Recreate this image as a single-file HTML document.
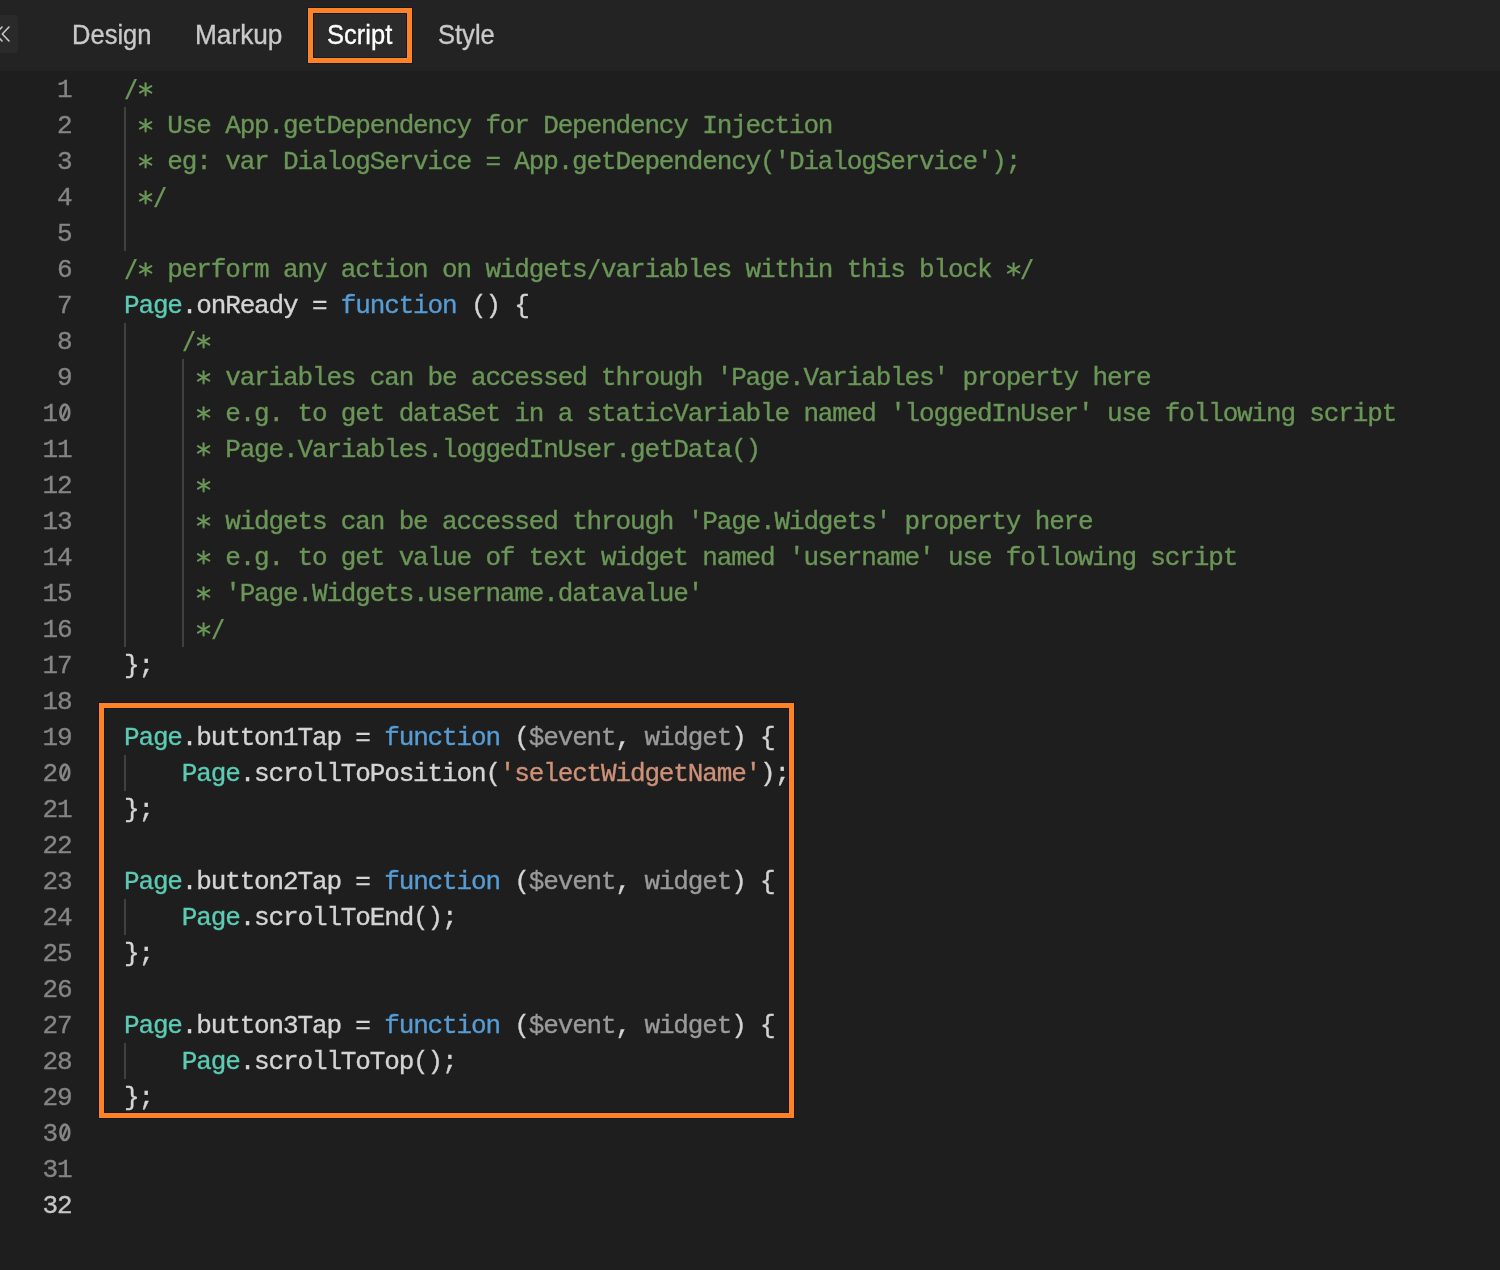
<!DOCTYPE html>
<html><head><meta charset="utf-8">
<style>
html,body{margin:0;padding:0;}
#code{position:absolute;left:0;top:0;width:1500px;height:1270px;will-change:transform;}
body{width:1500px;height:1270px;background:#1e1e1e;position:relative;overflow:hidden;font-family:"Liberation Sans",sans-serif;}
#hdr{position:absolute;left:0;top:0;width:1500px;height:71px;background:#232323;}
#hdrt{position:absolute;left:0;top:0;width:1500px;height:71px;will-change:transform;}
#back{position:absolute;left:-6px;top:15px;width:24px;height:38px;background:#2a2a2a;border-radius:4px;}
#back svg{position:absolute;left:0;top:0;}
.tab{position:absolute;top:-1px;height:71px;line-height:71px;font-size:27.6px;color:#c9c9c9;white-space:nowrap;transform-origin:0 0;transform:scaleX(0.925);-webkit-text-stroke:0.35px currentColor;}
#scr{position:absolute;left:308px;top:8px;width:94px;height:45px;border:5px solid #ff8226;box-shadow:0 0 0 1px rgba(16,24,32,.8),inset 0 0 0 1px rgba(16,24,32,.8);background:#2b2b2b;}
.tab.on{color:#ffffff;}
.ln{position:absolute;left:0;width:71.5px;text-align:right;height:36px;line-height:36px;font-family:"Liberation Mono",monospace;font-size:26px;letter-spacing:-1.147px;color:#858585;white-space:pre;-webkit-text-stroke:0.35px currentColor;}
.ln.act{color:#c6c6c6;}
.cl{position:absolute;left:124px;height:36px;line-height:36px;font-family:"Liberation Mono",monospace;font-size:26px;letter-spacing:-1.147px;color:#d4d4d4;white-space:pre;-webkit-text-stroke:0.35px currentColor;}
.c{color:#6a9657;} .t{color:#5ccbb3;} .k{color:#569cd6;} .s{color:#ce9178;} .p{color:#9a9a9a;} .d{color:#d4d4d4;}
.ast{position:absolute;}
.g{position:absolute;width:2px;background:#404040;}
#hl{position:absolute;left:99px;top:703px;width:685px;height:405px;border:5px solid #ff8226;box-shadow:0 0 0 1px rgba(16,24,32,.8),inset 0 0 0 1px rgba(16,24,32,.8);}
</style></head><body>
<div id="hdr">
 <div id="back"><svg width="24" height="38" viewBox="0 0 24 38"><polyline points="8,12 1.3,19 8,26" fill="none" stroke="#c8c8c8" stroke-width="1.6" stroke-linecap="round" stroke-linejoin="round"/><polyline points="15,12 8.3,19 15,26" fill="none" stroke="#c8c8c8" stroke-width="1.6" stroke-linecap="round" stroke-linejoin="round"/></svg></div>
 <div id="scr"></div>
 <div id="hdrt">
 <div class="tab" style="left:72px">Design</div>
 <div class="tab" style="left:195px;transform:scaleX(0.95)">Markup</div>
 <div class="tab on" style="left:327px">Script</div>
 <div class="tab" style="left:438px">Style</div>
 </div>
</div>
<div id="code">
<div class="ln" style="top:72px">1</div>
<svg class="ast" style="left:124.00px;top:71px" width="15" height="36"><polygon points="10.4,8 13,8 3.6,28.2 1,28.2" fill="#6a9657"/></svg>
<svg class="ast" style="left:138.46px;top:71px" width="15" height="36"><g stroke="#6a9657" stroke-width="2.1" stroke-linecap="round"><line x1="7.6" y1="12.299999999999999" x2="7.6" y2="24.5"/><line x1="1.90" y1="15.20" x2="13.30" y2="21.60"/><line x1="1.90" y1="21.60" x2="13.30" y2="15.20"/></g></svg>
<div class="cl" style="top:72px"><span class="c">  </span></div>
<div class="ln" style="top:108px">2</div>
<svg class="ast" style="left:138.46px;top:107px" width="15" height="36"><g stroke="#6a9657" stroke-width="2.1" stroke-linecap="round"><line x1="7.6" y1="12.299999999999999" x2="7.6" y2="24.5"/><line x1="1.90" y1="15.20" x2="13.30" y2="21.60"/><line x1="1.90" y1="21.60" x2="13.30" y2="15.20"/></g></svg>
<div class="cl" style="top:108px"><span class="c">   Use App.getDependency for Dependency Injection</span></div>
<div class="ln" style="top:144px">3</div>
<svg class="ast" style="left:138.46px;top:143px" width="15" height="36"><g stroke="#6a9657" stroke-width="2.1" stroke-linecap="round"><line x1="7.6" y1="12.299999999999999" x2="7.6" y2="24.5"/><line x1="1.90" y1="15.20" x2="13.30" y2="21.60"/><line x1="1.90" y1="21.60" x2="13.30" y2="15.20"/></g></svg>
<div class="cl" style="top:144px"><span class="c">   eg: var DialogService = App.getDependency(&#x27;DialogService&#x27;);</span></div>
<div class="ln" style="top:180px">4</div>
<svg class="ast" style="left:138.46px;top:179px" width="15" height="36"><g stroke="#6a9657" stroke-width="2.1" stroke-linecap="round"><line x1="7.6" y1="12.299999999999999" x2="7.6" y2="24.5"/><line x1="1.90" y1="15.20" x2="13.30" y2="21.60"/><line x1="1.90" y1="21.60" x2="13.30" y2="15.20"/></g></svg>
<svg class="ast" style="left:152.91px;top:179px" width="15" height="36"><polygon points="10.4,8 13,8 3.6,28.2 1,28.2" fill="#6a9657"/></svg>
<div class="cl" style="top:180px"><span class="c">   </span></div>
<div class="ln" style="top:216px">5</div>
<div class="ln" style="top:252px">6</div>
<svg class="ast" style="left:124.00px;top:251px" width="15" height="36"><polygon points="10.4,8 13,8 3.6,28.2 1,28.2" fill="#6a9657"/></svg>
<svg class="ast" style="left:138.46px;top:251px" width="15" height="36"><g stroke="#6a9657" stroke-width="2.1" stroke-linecap="round"><line x1="7.6" y1="12.299999999999999" x2="7.6" y2="24.5"/><line x1="1.90" y1="15.20" x2="13.30" y2="21.60"/><line x1="1.90" y1="21.60" x2="13.30" y2="15.20"/></g></svg>
<svg class="ast" style="left:586.56px;top:251px" width="15" height="36"><polygon points="10.4,8 13,8 3.6,28.2 1,28.2" fill="#6a9657"/></svg>
<svg class="ast" style="left:1005.75px;top:251px" width="15" height="36"><g stroke="#6a9657" stroke-width="2.1" stroke-linecap="round"><line x1="7.6" y1="12.299999999999999" x2="7.6" y2="24.5"/><line x1="1.90" y1="15.20" x2="13.30" y2="21.60"/><line x1="1.90" y1="21.60" x2="13.30" y2="15.20"/></g></svg>
<svg class="ast" style="left:1020.21px;top:251px" width="15" height="36"><polygon points="10.4,8 13,8 3.6,28.2 1,28.2" fill="#6a9657"/></svg>
<div class="cl" style="top:252px"><span class="c">   perform any action on widgets variables within this block   </span></div>
<div class="ln" style="top:288px">7</div>
<div class="cl" style="top:288px"><span class="t">Page</span><span class="d">.onReady = </span><span class="k">function</span><span class="d"> () {</span></div>
<div class="ln" style="top:324px">8</div>
<svg class="ast" style="left:181.82px;top:323px" width="15" height="36"><polygon points="10.4,8 13,8 3.6,28.2 1,28.2" fill="#6a9657"/></svg>
<svg class="ast" style="left:196.28px;top:323px" width="15" height="36"><g stroke="#6a9657" stroke-width="2.1" stroke-linecap="round"><line x1="7.6" y1="12.299999999999999" x2="7.6" y2="24.5"/><line x1="1.90" y1="15.20" x2="13.30" y2="21.60"/><line x1="1.90" y1="21.60" x2="13.30" y2="15.20"/></g></svg>
<div class="cl" style="top:324px"><span class="d">    </span><span class="c">  </span></div>
<div class="ln" style="top:360px">9</div>
<svg class="ast" style="left:196.28px;top:359px" width="15" height="36"><g stroke="#6a9657" stroke-width="2.1" stroke-linecap="round"><line x1="7.6" y1="12.299999999999999" x2="7.6" y2="24.5"/><line x1="1.90" y1="15.20" x2="13.30" y2="21.60"/><line x1="1.90" y1="21.60" x2="13.30" y2="15.20"/></g></svg>
<div class="cl" style="top:360px"><span class="d">    </span><span class="c">   variables can be accessed through &#x27;Page.Variables&#x27; property here</span></div>
<svg class="ast" style="left:56px;top:395px" width="18" height="36"><ellipse cx="8.85" cy="17.3" rx="4.4" ry="7.7" fill="none" stroke="#858585" stroke-width="2.7"/><line x1="11.2" y1="11.8" x2="6.8" y2="22.2" stroke="#858585" stroke-width="2.3"/></svg>
<div class="ln" style="top:396px">1 </div>
<svg class="ast" style="left:196.28px;top:395px" width="15" height="36"><g stroke="#6a9657" stroke-width="2.1" stroke-linecap="round"><line x1="7.6" y1="12.299999999999999" x2="7.6" y2="24.5"/><line x1="1.90" y1="15.20" x2="13.30" y2="21.60"/><line x1="1.90" y1="21.60" x2="13.30" y2="15.20"/></g></svg>
<div class="cl" style="top:396px"><span class="d">    </span><span class="c">   e.g. to get dataSet in a staticVariable named &#x27;loggedInUser&#x27; use following script</span></div>
<div class="ln" style="top:432px">11</div>
<svg class="ast" style="left:196.28px;top:431px" width="15" height="36"><g stroke="#6a9657" stroke-width="2.1" stroke-linecap="round"><line x1="7.6" y1="12.299999999999999" x2="7.6" y2="24.5"/><line x1="1.90" y1="15.20" x2="13.30" y2="21.60"/><line x1="1.90" y1="21.60" x2="13.30" y2="15.20"/></g></svg>
<div class="cl" style="top:432px"><span class="d">    </span><span class="c">   Page.Variables.loggedInUser.getData()</span></div>
<div class="ln" style="top:468px">12</div>
<svg class="ast" style="left:196.28px;top:467px" width="15" height="36"><g stroke="#6a9657" stroke-width="2.1" stroke-linecap="round"><line x1="7.6" y1="12.299999999999999" x2="7.6" y2="24.5"/><line x1="1.90" y1="15.20" x2="13.30" y2="21.60"/><line x1="1.90" y1="21.60" x2="13.30" y2="15.20"/></g></svg>
<div class="cl" style="top:468px"><span class="d">    </span><span class="c">  </span></div>
<div class="ln" style="top:504px">13</div>
<svg class="ast" style="left:196.28px;top:503px" width="15" height="36"><g stroke="#6a9657" stroke-width="2.1" stroke-linecap="round"><line x1="7.6" y1="12.299999999999999" x2="7.6" y2="24.5"/><line x1="1.90" y1="15.20" x2="13.30" y2="21.60"/><line x1="1.90" y1="21.60" x2="13.30" y2="15.20"/></g></svg>
<div class="cl" style="top:504px"><span class="d">    </span><span class="c">   widgets can be accessed through &#x27;Page.Widgets&#x27; property here</span></div>
<div class="ln" style="top:540px">14</div>
<svg class="ast" style="left:196.28px;top:539px" width="15" height="36"><g stroke="#6a9657" stroke-width="2.1" stroke-linecap="round"><line x1="7.6" y1="12.299999999999999" x2="7.6" y2="24.5"/><line x1="1.90" y1="15.20" x2="13.30" y2="21.60"/><line x1="1.90" y1="21.60" x2="13.30" y2="15.20"/></g></svg>
<div class="cl" style="top:540px"><span class="d">    </span><span class="c">   e.g. to get value of text widget named &#x27;username&#x27; use following script</span></div>
<div class="ln" style="top:576px">15</div>
<svg class="ast" style="left:196.28px;top:575px" width="15" height="36"><g stroke="#6a9657" stroke-width="2.1" stroke-linecap="round"><line x1="7.6" y1="12.299999999999999" x2="7.6" y2="24.5"/><line x1="1.90" y1="15.20" x2="13.30" y2="21.60"/><line x1="1.90" y1="21.60" x2="13.30" y2="15.20"/></g></svg>
<div class="cl" style="top:576px"><span class="d">    </span><span class="c">   &#x27;Page.Widgets.username.datavalue&#x27;</span></div>
<div class="ln" style="top:612px">16</div>
<svg class="ast" style="left:196.28px;top:611px" width="15" height="36"><g stroke="#6a9657" stroke-width="2.1" stroke-linecap="round"><line x1="7.6" y1="12.299999999999999" x2="7.6" y2="24.5"/><line x1="1.90" y1="15.20" x2="13.30" y2="21.60"/><line x1="1.90" y1="21.60" x2="13.30" y2="15.20"/></g></svg>
<svg class="ast" style="left:210.73px;top:611px" width="15" height="36"><polygon points="10.4,8 13,8 3.6,28.2 1,28.2" fill="#6a9657"/></svg>
<div class="cl" style="top:612px"><span class="d">    </span><span class="c">   </span></div>
<div class="ln" style="top:648px">17</div>
<div class="cl" style="top:648px"><span class="d">};</span></div>
<div class="ln" style="top:684px">18</div>
<div class="ln" style="top:720px">19</div>
<div class="cl" style="top:720px"><span class="t">Page</span><span class="d">.button1Tap = </span><span class="k">function</span><span class="d"> (</span><span class="p">$event</span><span class="d">, </span><span class="p">widget</span><span class="d">) {</span></div>
<svg class="ast" style="left:56px;top:755px" width="18" height="36"><ellipse cx="8.85" cy="17.3" rx="4.4" ry="7.7" fill="none" stroke="#858585" stroke-width="2.7"/><line x1="11.2" y1="11.8" x2="6.8" y2="22.2" stroke="#858585" stroke-width="2.3"/></svg>
<div class="ln" style="top:756px">2 </div>
<div class="cl" style="top:756px"><span class="d">    </span><span class="t">Page</span><span class="d">.scrollToPosition(</span><span class="s">&#x27;selectWidgetName&#x27;</span><span class="d">);</span></div>
<div class="ln" style="top:792px">21</div>
<div class="cl" style="top:792px"><span class="d">};</span></div>
<div class="ln" style="top:828px">22</div>
<div class="ln" style="top:864px">23</div>
<div class="cl" style="top:864px"><span class="t">Page</span><span class="d">.button2Tap = </span><span class="k">function</span><span class="d"> (</span><span class="p">$event</span><span class="d">, </span><span class="p">widget</span><span class="d">) {</span></div>
<div class="ln" style="top:900px">24</div>
<div class="cl" style="top:900px"><span class="d">    </span><span class="t">Page</span><span class="d">.scrollToEnd();</span></div>
<div class="ln" style="top:936px">25</div>
<div class="cl" style="top:936px"><span class="d">};</span></div>
<div class="ln" style="top:972px">26</div>
<div class="ln" style="top:1008px">27</div>
<div class="cl" style="top:1008px"><span class="t">Page</span><span class="d">.button3Tap = </span><span class="k">function</span><span class="d"> (</span><span class="p">$event</span><span class="d">, </span><span class="p">widget</span><span class="d">) {</span></div>
<div class="ln" style="top:1044px">28</div>
<div class="cl" style="top:1044px"><span class="d">    </span><span class="t">Page</span><span class="d">.scrollToTop();</span></div>
<div class="ln" style="top:1080px">29</div>
<div class="cl" style="top:1080px"><span class="d">};</span></div>
<svg class="ast" style="left:56px;top:1115px" width="18" height="36"><ellipse cx="8.85" cy="17.3" rx="4.4" ry="7.7" fill="none" stroke="#858585" stroke-width="2.7"/><line x1="11.2" y1="11.8" x2="6.8" y2="22.2" stroke="#858585" stroke-width="2.3"/></svg>
<div class="ln" style="top:1116px">3 </div>
<div class="ln" style="top:1152px">31</div>
<div class="ln act" style="top:1188px">32</div>
<div class="g" style="left:124.00px;top:107px;height:144px"></div>
<div class="g" style="left:124.00px;top:323px;height:324px"></div>
<div class="g" style="left:181.82px;top:359px;height:288px"></div>
<div class="g" style="left:124.00px;top:755px;height:36px"></div>
<div class="g" style="left:124.00px;top:899px;height:36px"></div>
<div class="g" style="left:124.00px;top:1043px;height:36px"></div>
</div>
<div id="hl"></div>
</body></html>
